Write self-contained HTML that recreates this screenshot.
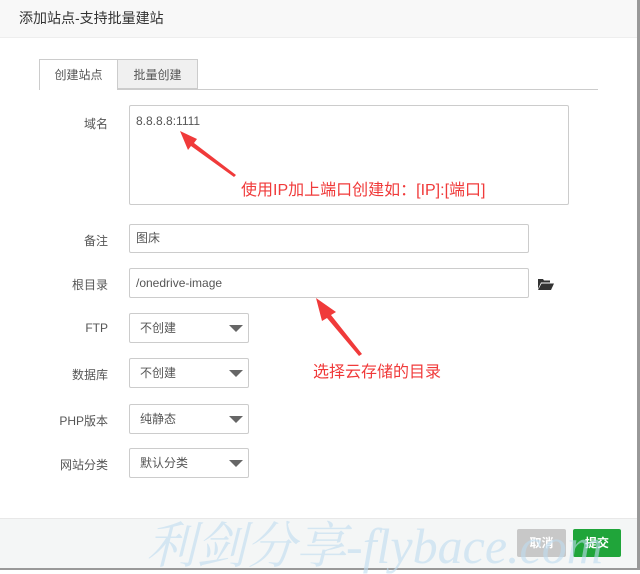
<!DOCTYPE html>
<html><head><meta charset="utf-8"><style>
body{margin:0;width:640px;height:570px;background:#fff;font-family:"Liberation Sans","Noto Sans CJK SC",sans-serif;font-size:12px;color:#555;position:relative;overflow:hidden}
.a{position:absolute}
.title{left:0;top:0;width:637px;height:37px;background:#f8f8f8;border-bottom:1px solid #eee;font-size:14px;color:#333;line-height:36px;text-indent:19px}
.lbl{width:108px;text-align:right;color:#555;font-size:12px}
.inp{border:1px solid #ccc;border-radius:2px;box-sizing:border-box;color:#555;font-size:12px;padding-left:6px}
.sel{width:120px;height:30px;line-height:28px;padding-left:10px}
.sel:after{content:"";position:absolute;right:5px;top:11px;border-left:7px solid transparent;border-right:7px solid transparent;border-top:7px solid #666}
.red{color:#f03a3a;font-size:16px}
</style></head><body>
<div class="a title">添加站点-支持批量建站</div>
<div class="a" style="left:637px;top:0;width:3px;height:570px;background:#999"></div>
<div class="a" style="left:39px;top:89px;width:559px;height:1px;background:#ccc"></div>
<div class="a" style="left:39px;top:59px;width:79px;height:31px;border:1px solid #ccc;border-bottom:none;background:#fff;box-sizing:border-box;text-align:center;line-height:30px;color:#555">创建站点</div>
<div class="a" style="left:118px;top:59px;width:80px;height:30px;border:1px solid #ccc;border-left:none;background:#f0f0f0;box-sizing:border-box;text-align:center;line-height:30px;color:#555">批量创建</div>
<div class="a lbl" style="left:0;top:115px">域名</div>
<div class="a inp" style="left:129px;top:105px;width:440px;height:100px;padding-top:8px">8.8.8.8:1111</div>
<div class="a lbl" style="left:0;top:232px">备注</div>
<div class="a inp" style="left:129px;top:224px;width:400px;height:29px;line-height:27px">图床</div>
<div class="a lbl" style="left:0;top:276px">根目录</div>
<div class="a inp" style="left:129px;top:268px;width:400px;height:30px;line-height:28px">/onedrive-image</div>
<svg class="a" style="left:538px;top:278px" width="16" height="12" viewBox="0 0 16 12"><path d="M0 1h5l1 1.5h6v2H3L0 11z M3.5 5.5H16L13 12H0z" fill="#333"/></svg>
<div class="a lbl" style="left:0;top:321px">FTP</div>
<div class="a inp sel" style="left:129px;top:313px">不创建</div>
<div class="a lbl" style="left:0;top:366px">数据库</div>
<div class="a inp sel" style="left:129px;top:358px">不创建</div>
<div class="a lbl" style="left:0;top:412px">PHP版本</div>
<div class="a inp sel" style="left:129px;top:404px">纯静态</div>
<div class="a lbl" style="left:0;top:456px">网站分类</div>
<div class="a inp sel" style="left:129px;top:448px">默认分类</div>
<div class="a red" style="left:241px;top:176px">使用IP加上端口创建如：[IP]:[端口]</div>
<div class="a red" style="left:313px;top:358px">选择云存储的目录</div>
<svg class="a" style="left:0;top:0" width="640" height="570"><path d="M180 131L197 139L194 143L236 175L234 177L191 146L188 150Z" fill="#f03a3a"/><path d="M316 298L336 312L331 315L362 354L359 356L327 318L322 321Z" fill="#f03a3a"/></svg>
<div class="a" style="left:0;top:518px;width:637px;height:50px;background:#f4f6f6;border-top:1px solid #e8e8e8"></div>
<div class="a" style="left:0;top:568px;width:640px;height:2px;background:#999"></div>
<div class="a" style="left:517px;top:529px;width:49px;height:28px;background:#c8c8c8;border-radius:2px;color:#fff;text-align:center;line-height:28px;font-weight:bold">取消</div>
<div class="a" style="left:573px;top:529px;width:48px;height:28px;background:#20a53a;border-radius:2px;color:#fff;text-align:center;line-height:28px;font-weight:bold">提交</div>
<div class="a" style="left:146px;top:518px;font-size:50px;color:rgba(190,220,240,.6);font-style:italic;font-family:'Liberation Serif','Noto Serif CJK SC',serif;white-space:nowrap;line-height:56px">利剑分享-flybace.com</div>
</body></html>
